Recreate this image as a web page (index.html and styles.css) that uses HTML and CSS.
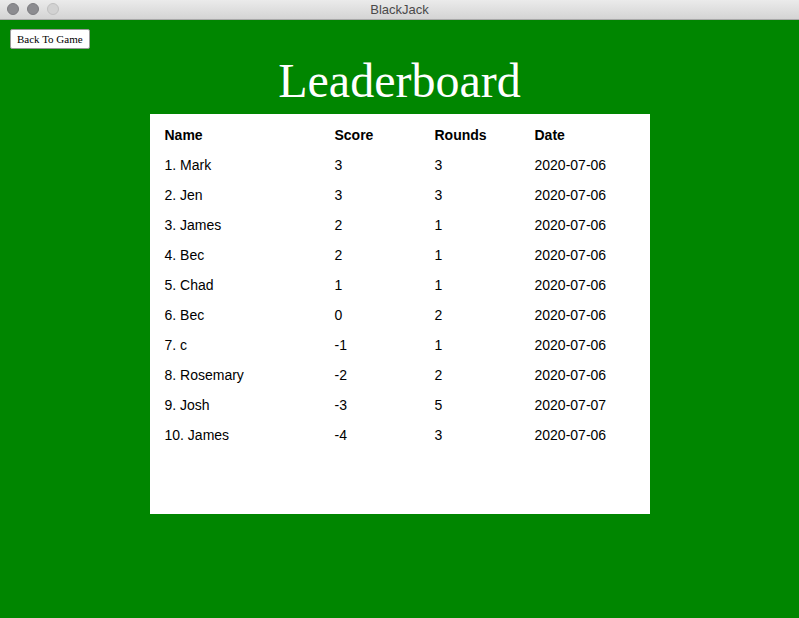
FILE: index.html
```html
<!DOCTYPE html>
<html>
<head>
<meta charset="utf-8">
<title>BlackJack</title>
<link rel="stylesheet" href="styles.css">
</head>
<body>
<div class="window">
  <div class="titlebar">
    <div class="lights">
      <span class="light"></span>
      <span class="light"></span>
      <span class="light off"></span>
    </div>
    <div class="wintitle">BlackJack</div>
  </div>
  <div class="content">
    <button class="back">Back To Game</button>
    <h1 class="heading">Leaderboard</h1>
    <div class="panel">
      <table class="board">
        <thead>
          <tr><th>Name</th><th>Score</th><th>Rounds</th><th>Date</th></tr>
        </thead>
        <tbody>
          <tr><td>1. Mark</td><td>3</td><td>3</td><td>2020-07-06</td></tr>
          <tr><td>2. Jen</td><td>3</td><td>3</td><td>2020-07-06</td></tr>
          <tr><td>3. James</td><td>2</td><td>1</td><td>2020-07-06</td></tr>
          <tr><td>4. Bec</td><td>2</td><td>1</td><td>2020-07-06</td></tr>
          <tr><td>5. Chad</td><td>1</td><td>1</td><td>2020-07-06</td></tr>
          <tr><td>6. Bec</td><td>0</td><td>2</td><td>2020-07-06</td></tr>
          <tr><td>7. c</td><td>-1</td><td>1</td><td>2020-07-06</td></tr>
          <tr><td>8. Rosemary</td><td>-2</td><td>2</td><td>2020-07-06</td></tr>
          <tr><td>9. Josh</td><td>-3</td><td>5</td><td>2020-07-07</td></tr>
          <tr><td>10. James</td><td>-4</td><td>3</td><td>2020-07-06</td></tr>
        </tbody>
      </table>
    </div>
  </div>
</div>
</body>
</html>
```

FILE: styles.css
```css
html, body {
  margin: 0;
  padding: 0;
}
body {
  width: 799px;
  height: 618px;
  overflow: hidden;
  background: #008600;
}
.window {
  display: flex;
  flex-direction: column;
  height: 618px;
}
.titlebar {
  position: relative;
  height: 19px;
  flex: none;
  background: linear-gradient(#ebebeb, #d4d4d4);
  border-bottom: 1px solid #a8a8a8;
  display: flex;
  align-items: center;
  justify-content: center;
}
.lights {
  position: absolute;
  left: 7px;
  top: 3px;
  display: flex;
  gap: 8px;
}
.light {
  width: 12px;
  height: 12px;
  border-radius: 50%;
  background: #8c8c90;
  box-sizing: border-box;
  border: 1px solid #7c7c80;
}
.light.off {
  background: #d2d2d2;
  border-color: #c0c0c0;
}
.wintitle {
  font-family: "Liberation Sans", Arial, sans-serif;
  font-size: 13px;
  color: #4a4a4a;
  line-height: 19px;
}
.content {
  flex: 1;
  background: #008600;
  padding: 9px 10px 0;
  display: flex;
  flex-direction: column;
  align-items: flex-start;
}
.back {
  font-family: "Liberation Serif", "Times New Roman", serif;
  font-size: 11px;
  height: 20px;
  padding: 0 6px;
  margin: 0;
  background: #ffffff;
  color: #000;
  border: 1px solid #9a9a9a;
  border-radius: 2px;
  line-height: 18px;
}
.heading {
  align-self: stretch;
  text-align: center;
  font-family: "Liberation Serif", "Times New Roman", serif;
  font-weight: normal;
  font-size: 48px;
  line-height: 56px;
  color: #ffffff;
  margin: 4px 0 0 0;
}
.panel {
  align-self: center;
  margin: 5px 0 0 0;
  width: 500px;
  height: 400px;
  background: #ffffff;
  box-sizing: border-box;
  padding: 6px 0 0 15px;
}
.board {
  border-collapse: collapse;
  font-family: "Liberation Sans", Arial, Helvetica, sans-serif;
  font-size: 14px;
  color: #000;
}
.board th, .board td {
  text-align: left;
  padding: 0;
  height: 30px;
  vertical-align: middle;
}
.board th {
  font-weight: bold;
}
.board th:nth-child(1) { width: 170px; }
.board th:nth-child(2) { width: 100px; }
.board th:nth-child(3) { width: 100px; }
.board th:nth-child(4) { width: 100px; }
```
